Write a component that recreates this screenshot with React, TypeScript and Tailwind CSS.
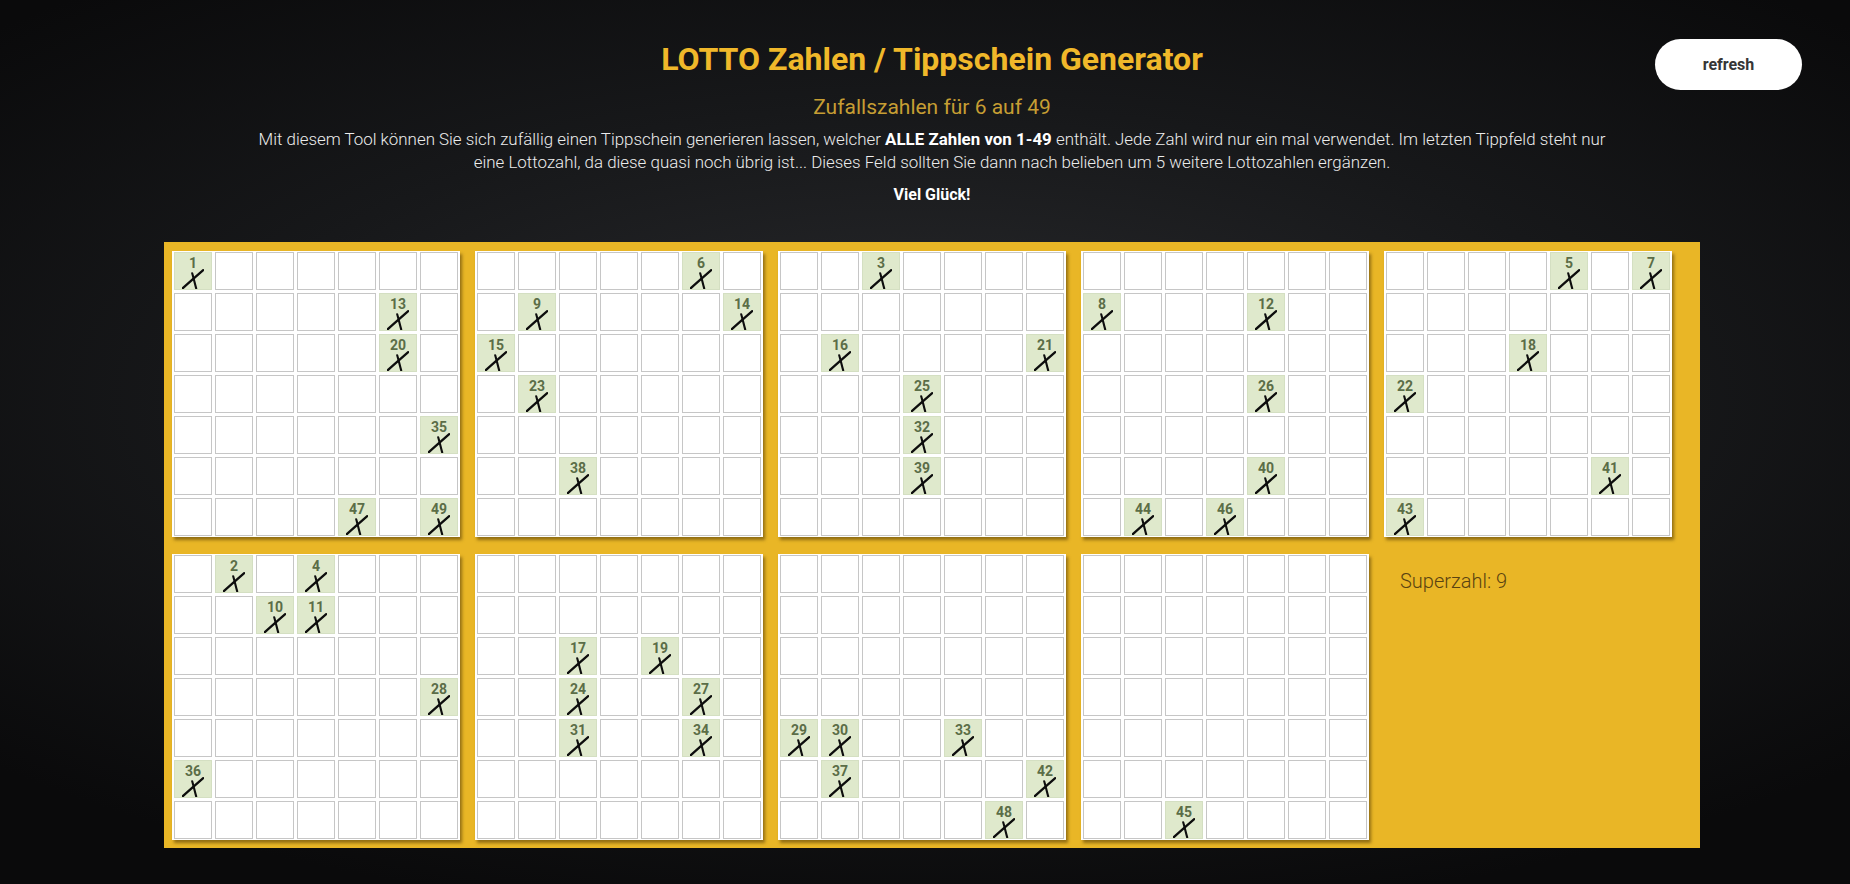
import React from 'react';

const tickets: number[][] = [
  [1, 13, 20, 35, 47, 49],
  [6, 9, 14, 15, 23, 38],
  [3, 16, 21, 25, 32, 39],
  [8, 12, 26, 40, 44, 46],
  [5, 7, 18, 22, 41, 43],
  [2, 4, 10, 11, 28, 36],
  [17, 19, 24, 27, 31, 34],
  [29, 30, 33, 37, 42, 48],
  [45],
];

const numbers = Array.from({ length: 49 }, (_, i) => i + 1);

const Cross: React.FC = () => (
  <svg viewBox="0 0 22 20" className="w-[22px] h-[20px] -mt-[1px]">
    <path d="M0.8 19.2 C6 14.5 14 7.5 21.2 1.2" stroke="#0d0d0d" strokeWidth="2.3" strokeLinecap="round" fill="none" />
    <path d="M10.2 4.2 C11.6 9 12.8 14.5 14.2 19.4" stroke="#0d0d0d" strokeWidth="2.1" strokeLinecap="round" fill="none" />
  </svg>
);

const Ticket: React.FC<{ picks: number[] }> = ({ picks }) => (
  <div className="w-[288px] h-[286px] bg-white px-[2px] py-[1px] shadow-[2px_3px_3px_rgba(60,40,0,0.5)]">
    <div className="grid grid-cols-7 gap-[3px]">
      {numbers.map((n) =>
        picks.includes(n) ? (
          <div
            key={n}
            className="w-[38px] h-[38px] border border-[#d4dfc2] bg-[#dfe9cc] flex flex-col items-center pt-[3px]"
          >
            <span className="text-[14px] leading-[14px] font-bold text-[#5b6d47]">{n}</span>
            <Cross />
          </div>
        ) : (
          <div key={n} className="w-[38px] h-[38px] border border-[#c6c6c6] bg-white" />
        )
      )}
    </div>
  </div>
);

const App: React.FC = () => {
  return (
    <div className="relative min-h-[884px] w-full bg-[radial-gradient(ellipse_70%_60%_at_50%_45%,#2a2b2e_0%,#17181a_55%,#0a0a0b_100%)] font-['Roboto','Liberation_Sans',sans-serif] pb-[36px]">
      <button className="absolute top-[39px] right-[48px] w-[147px] h-[51px] rounded-full bg-white text-[16px] font-bold text-[#363636]">
        refresh
      </button>

      <div className="ml-[164px] w-[1536px]">
        <div className="text-center pt-[40px]">
          <h1 className="text-[32px] leading-[38px] font-bold text-[#f0b82a]">
            LOTTO Zahlen / Tippschein Generator
          </h1>
          <h2 className="mt-[16px] text-[21px] leading-[26px] text-[#c69e33]">Zufallszahlen für 6 auf 49</h2>
          <p className="mt-[8px] mx-auto w-[1364px] text-[16.9px] leading-[23px] font-light text-[#ececec]">
            Mit diesem Tool können Sie sich zufällig einen Tippschein generieren lassen, welcher{' '}
            <strong className="font-bold text-white">ALLE Zahlen von 1-49</strong> enthält. Jede Zahl wird nur ein mal
            verwendet. Im letzten Tippfeld steht nur eine Lottozahl, da diese quasi noch übrig ist... Dieses Feld
            sollten Sie dann nach belieben um 5 weitere Lottozahlen ergänzen.
          </p>
          <p className="mt-[9px] text-[16px] leading-[23px] font-bold text-white">Viel Glück!</p>
        </div>

        <div className="mt-[36px] h-[606px] bg-[#e9b626] pl-[8px] pt-[9px] flex flex-wrap content-start gap-x-[15px] gap-y-[17px]">
          {tickets.map((t, i) => (
            <Ticket key={i} picks={t} />
          ))}
          <div className="w-[288px] h-[286px] pl-[16px] pt-[12px]">
            <span className="text-[20px] font-light text-[#5a4311]">Superzahl: 9</span>
          </div>
        </div>
      </div>
    </div>
  );
};

export default App;
